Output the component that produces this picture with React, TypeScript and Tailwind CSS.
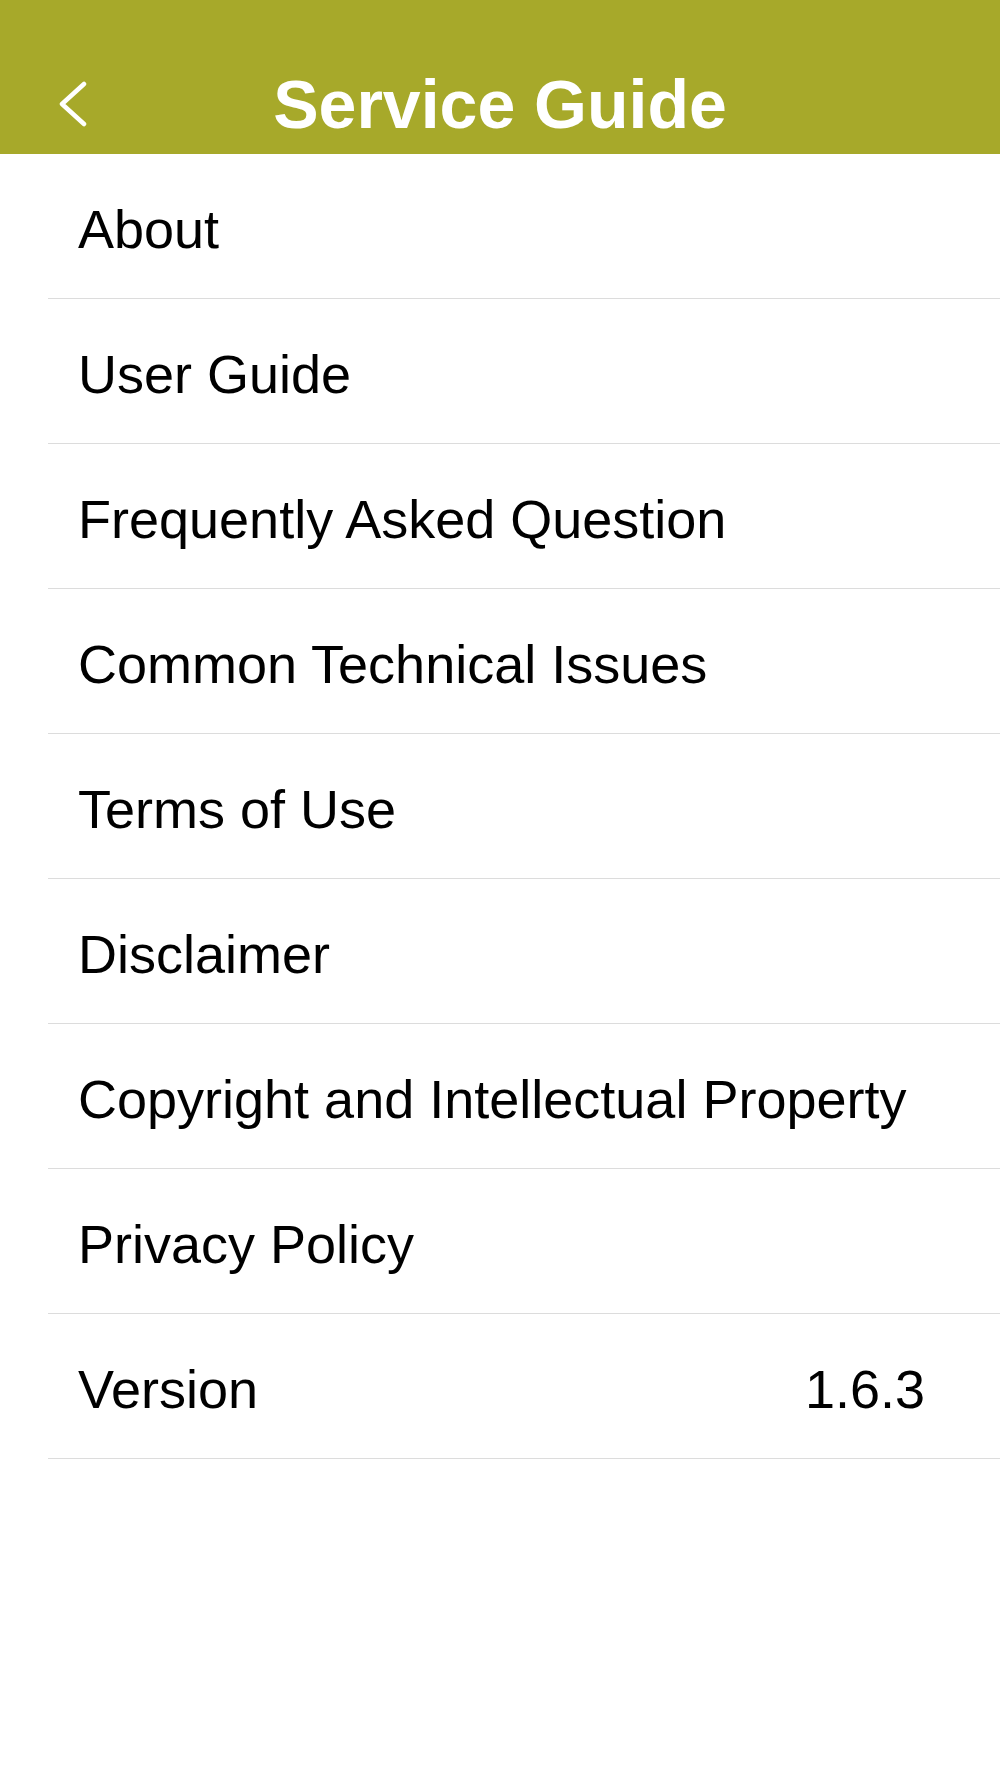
export default function App() {
  const items = [
    "About",
    "User Guide",
    "Frequently Asked Question",
    "Common Technical Issues",
    "Terms of Use",
    "Disclaimer",
    "Copyright and Intellectual Property",
    "Privacy Policy",
  ];

  return (
    <div className="w-[1000px] h-[1778px] bg-white font-['Liberation_Sans',Arial,sans-serif]">
      {/* header */}
      <div className="h-[154px] bg-[#a7a92a] flex items-center pt-[54px]">
        <div className="w-[150px] pl-[58px] flex items-center">
          <svg width="30" height="46" viewBox="0 0 30 46" fill="none">
            <polyline
              points="26,3 4,23 26,43"
              stroke="white"
              strokeWidth="4.5"
              strokeLinecap="round"
              strokeLinejoin="round"
            />
          </svg>
        </div>
        <h1 className="flex-1 text-center text-white font-bold text-[68px] leading-none">
          Service Guide
        </h1>
        <div className="w-[150px]" />
      </div>

      {/* list */}
      <div className="ml-[48px]">
        {items.map((item) => (
          <div
            key={item}
            className="h-[145px] border-b border-[#dcdcdc] flex items-center pl-[30px] pt-[7px] text-[54px] text-black"
          >
            {item}
          </div>
        ))}
        <div className="h-[145px] border-b border-[#dcdcdc] flex items-center justify-between pl-[30px] pr-[75px] pt-[7px] text-[54px] text-black">
          <span>Version</span>
          <span>1.6.3</span>
        </div>
      </div>
    </div>
  );
}
